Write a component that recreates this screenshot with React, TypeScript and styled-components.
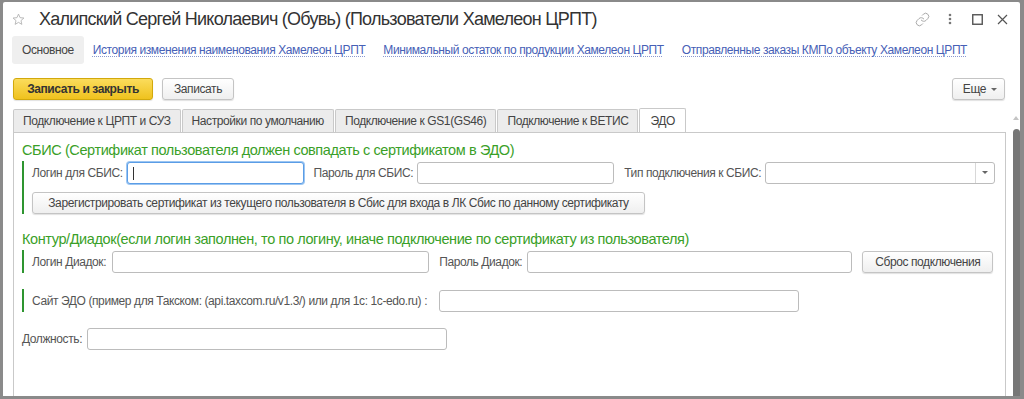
import React from 'react';
import styled, { createGlobalStyle, css } from 'styled-components';
import { Link } from 'lucide-react';

const GlobalStyle = createGlobalStyle`
  html, body {
    margin: 0;
    padding: 0;
  }
  body {
    background: #8a8a8a;
    font-family: Arial, 'Liberation Sans', sans-serif;
    font-size: 12px;
    letter-spacing: -0.4px;
    color: #4d4d4d;
  }
`;

const Window = styled.div`
  margin: 2px 4px 0 3px;
  height: 394px;
  background: #fff;
  display: flex;
  flex-direction: column;
  border-radius: 2px 2px 0 0;
  overflow: hidden;
`;

const TitleBar = styled.div`
  height: 34px;
  display: flex;
  align-items: center;
  padding-left: 9px;
  flex-shrink: 0;
`;

const Title = styled.h1`
  margin: 0 0 0 14px;
  font-size: 18px;
  letter-spacing: -0.75px;
  font-weight: normal;
  color: #333;
  white-space: nowrap;
`;

const Controls = styled.div`
  margin-left: auto;
  display: flex;
  align-items: center;
  padding-right: 6px;
`;

const IconBtn = styled.div<{ w: number }>`
  width: ${(p) => p.w}px;
  height: 24px;
  display: flex;
  align-items: center;
  justify-content: center;
  color: #666;
`;

const NavRow = styled.div`
  height: 28px;
  display: flex;
  align-items: center;
  padding-left: 9px;
  flex-shrink: 0;
`;

const NavPill = styled.div`
  height: 28px;
  line-height: 28px;
  padding: 0 10px;
  background: #efefef;
  border-radius: 3px;
  color: #444;
`;

const NavLinks = styled.div`
  display: flex;
  gap: 18px;
  margin-left: 9px;
`;

const NavLink = styled.a`
  color: #4660b6;
  text-decoration: underline dotted #8a98d0;
  text-underline-offset: 2px;
  white-space: nowrap;
`;

const Toolbar = styled.div`
  margin-top: 14px;
  display: flex;
  align-items: center;
  gap: 9px;
  padding: 0 15px 0 10px;
  flex-shrink: 0;
`;

const Button = styled.button<{ primary?: boolean; wide?: number }>`
  height: 22px;
  padding: 0 11px;
  border: 1px solid #c4c4c4;
  border-radius: 3px;
  background: linear-gradient(#ffffff, #efefef);
  box-shadow: 0 1px 1px rgba(0, 0, 0, 0.12);
  font-family: Arial, 'Liberation Sans', sans-serif;
  font-size: 12px;
  letter-spacing: -0.4px;
  color: #444;
  white-space: nowrap;
  cursor: pointer;
  flex-shrink: 0;
  ${(p) =>
    p.wide &&
    css`
      width: ${p.wide}px;
      padding: 0;
    `}
  ${(p) =>
    p.primary &&
    css`
      background: linear-gradient(#fbdc5c, #efc21e);
      border-color: #d2a90c;
      color: #333;
      font-weight: bold;
    `}
`;

const MoreButton = styled(Button)`
  margin-left: auto;
  display: flex;
  align-items: center;
  gap: 5px;
  padding: 0 7px 0 10px;
`;

const Caret = styled.span`
  width: 0;
  height: 0;
  border-left: 3px solid transparent;
  border-right: 3px solid transparent;
  border-top: 3px solid #666;
`;

const Main = styled.div`
  margin-top: 9px;
  flex: 1;
  display: flex;
  min-height: 0;
`;

const Content = styled.div`
  flex: 1;
  min-width: 0;
  display: flex;
  flex-direction: column;
  padding: 0 6px 0 10px;
`;

const Tabs = styled.div`
  display: flex;
  height: 23px;
  position: relative;
  z-index: 1;
`;

const Tab = styled.div<{ active?: boolean }>`
  height: 23px;
  line-height: 22px;
  padding: 0 9px;
  box-sizing: border-box;
  border: 1px solid #c9c9c9;
  border-bottom: none;
  margin-right: 1px;
  background: #ececec;
  color: #444;
  white-space: nowrap;
  border-radius: 2px 2px 0 0;
  ${(p) =>
    p.active &&
    css`
      background: #fff;
      height: 24px;
      padding: 0 10px;
      margin-top: -1px;
      line-height: 24px;
    `}
`;

const Panel = styled.div`
  flex: 1;
  border: 1px solid #c9c9c9;
  border-bottom: none;
  padding: 9px 8px 0 8px;
  display: flex;
  flex-direction: column;
`;

const GroupTitle = styled.div<{ gap: number }>`
  margin-top: ${(p) => p.gap}px;
  height: 16px;
  line-height: 16px;
  font-size: 14.5px;
  color: #3a9f28;
  white-space: nowrap;
`;

const Group = styled.div<{ gap: number }>`
  margin-top: ${(p) => p.gap}px;
  border-left: 2px solid #2e9530;
  padding-left: 8px;
  display: flex;
  flex-direction: column;
  gap: 7px;
`;

const Row = styled.div<{ gap?: number }>`
  display: flex;
  align-items: center;
  height: 23px;
  margin-top: ${(p) => p.gap ?? 0}px;
`;

const Label = styled.span<{ pad?: number }>`
  color: #555;
  white-space: nowrap;
  margin-right: ${(p) => p.pad ?? 4}px;
`;

const Input = styled.div<{ w: number; focused?: boolean }>`
  width: ${(p) => p.w}px;
  height: 22px;
  box-sizing: border-box;
  border: 1px solid #bcbcbc;
  border-radius: 3px;
  background: #fff;
  margin-right: 10px;
  flex-shrink: 0;
  position: relative;
  ${(p) =>
    p.focused &&
    css`
      border-color: #5b9de6;
      box-shadow: 0 0 0 1px #9cc6f2;
    `}
`;

const TextCursor = styled.span`
  position: absolute;
  left: 5px;
  top: 4px;
  width: 1px;
  height: 13px;
  background: #333;
`;

const SelectArrow = styled.div`
  position: absolute;
  right: 0;
  top: 0;
  bottom: 0;
  width: 18px;
  border-left: 1px solid #d8d8d8;
  display: flex;
  align-items: center;
  justify-content: center;
`;

const Scrollbar = styled.div`
  width: 8px;
  flex-shrink: 0;
  display: flex;
  flex-direction: column;
  align-items: center;
`;

const ScrollArrow = styled.span`
  margin-top: 7px;
  width: 0;
  height: 0;
  border-left: 3px solid transparent;
  border-right: 3px solid transparent;
  border-bottom: 4px solid #c4c4c4;
`;

const Thumb = styled.div`
  margin-top: 9px;
  flex: 1;
  width: 7px;
  background: #777;
  border-radius: 4px 4px 0 0;
`;

const Star = () => (
  <svg width="13" height="13" viewBox="0 0 24 24">
    <polygon
      points="12,2 14.9,8.6 22,9.3 16.6,14 18.2,21 12,17.3 5.8,21 7.4,14 2,9.3 9.1,8.6"
      fill="none"
      stroke="#b0b0b0"
      strokeWidth="1.6"
      strokeLinejoin="round"
    />
  </svg>
);

const Dots = () => (
  <svg width="4" height="12" viewBox="0 0 4 12">
    <circle cx="2" cy="2" r="1.3" fill="#777" />
    <circle cx="2" cy="6" r="1.3" fill="#777" />
    <circle cx="2" cy="10" r="1.3" fill="#777" />
  </svg>
);

const Maximize = () => (
  <svg width="11" height="11" viewBox="0 0 11 11">
    <rect x="0.75" y="0.75" width="9.5" height="9.5" fill="none" stroke="#555" strokeWidth="1.4" />
  </svg>
);

const Close = () => (
  <svg width="11" height="11" viewBox="0 0 11 11">
    <path d="M1 1 L10 10 M10 1 L1 10" stroke="#555" strokeWidth="1.2" />
  </svg>
);

const links = [
  'История изменения наименования Хамелеон ЦРПТ',
  'Минимальный остаток по продукции Хамелеон ЦРПТ',
  'Отправленные заказы КМПо объекту Хамелеон ЦРПТ',
];

const tabs = [
  'Подключение к ЦРПТ и СУЗ',
  'Настройки по умолчанию',
  'Подключение к GS1(GS46)',
  'Подключение к ВЕТИС',
  'ЭДО',
];

export default function App() {
  return (
    <>
      <GlobalStyle />
      <Window>
        <TitleBar>
          <Star />
          <Title>Халипский Сергей Николаевич (Обувь) (Пользователи Хамелеон ЦРПТ)</Title>
          <Controls>
            <IconBtn w={28}>
              <Link size={15} color="#a8a8a8" strokeWidth={1.6} />
            </IconBtn>
            <IconBtn w={28}>
              <Dots />
            </IconBtn>
            <IconBtn w={26}>
              <Maximize />
            </IconBtn>
            <IconBtn w={24}>
              <Close />
            </IconBtn>
          </Controls>
        </TitleBar>

        <NavRow>
          <NavPill>Основное</NavPill>
          <NavLinks>
            {links.map((l) => (
              <NavLink key={l}>{l}</NavLink>
            ))}
          </NavLinks>
        </NavRow>

        <Toolbar>
          <Button primary wide={140}>Записать и закрыть</Button>
          <Button wide={72}>Записать</Button>
          <MoreButton>
            Еще <Caret />
          </MoreButton>
        </Toolbar>

        <Main>
          <Content>
            <Tabs>
              {tabs.map((t, i) => (
                <Tab key={t} active={i === tabs.length - 1}>
                  {t}
                </Tab>
              ))}
            </Tabs>
            <Panel>
              <GroupTitle gap={0}>СБИС (Сертификат пользователя должен совпадать с сертификатом в ЭДО)</GroupTitle>
              <Group gap={3}>
                <Row>
                  <Label>Логин для СБИС:</Label>
                  <Input w={177} focused>
                    <TextCursor />
                  </Input>
                  <Label>Пароль для СБИС:</Label>
                  <Input w={197} />
                  <Label>Тип подключения к СБИС:</Label>
                  <Input w={230}>
                    <SelectArrow>
                      <Caret />
                    </SelectArrow>
                  </Input>
                </Row>
                <Row>
                  <Button wide={613}>
                    Зарегистрировать сертификат из текущего пользователя в Сбис для входа в ЛК Сбис по данному сертификату
                  </Button>
                </Row>
              </Group>

              <GroupTitle gap={17}>
                Контур/Диадок(если логин заполнен, то по логину, иначе подключение по сертификату из пользователя)
              </GroupTitle>
              <Group gap={3}>
                <Row>
                  <Label pad={6}>Логин Диадок:</Label>
                  <Input w={317} />
                  <Label pad={5}>Пароль Диадок:</Label>
                  <Input w={325} />
                  <Button wide={131}>Сброс подключения</Button>
                </Row>
              </Group>

              <Group gap={16}>
                <Row>
                  <Label pad={12}>Сайт ЭДО (пример для Такском: (api.taxcom.ru/v1.3/) или для 1с: 1с-edo.ru) :</Label>
                  <Input w={360} />
                </Row>
              </Group>

              <Row gap={15}>
                <Label pad={5}>Должность:</Label>
                <Input w={360} />
              </Row>
            </Panel>
          </Content>
          <Scrollbar>
            <ScrollArrow />
            <Thumb />
          </Scrollbar>
        </Main>
      </Window>
    </>
  );
}
